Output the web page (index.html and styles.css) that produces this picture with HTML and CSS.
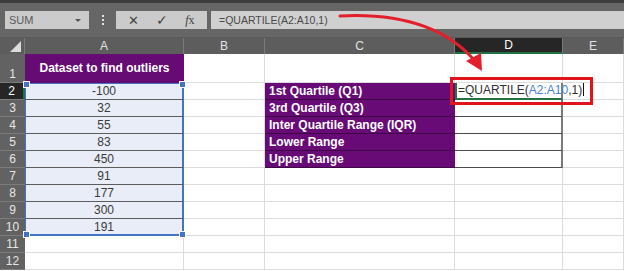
FILE: index.html
```html
<!DOCTYPE html>
<html lang="en">
<head>
<meta charset="UTF-8">
<title>Quartile outliers</title>
<link rel="stylesheet" href="styles.css">
</head>
<body>
<div class="app">
    <div class="topband"></div>
    <div class="toolbar">
        <div class="namebox">SUM<span class="caret"></span></div>
        <div class="grip"><i></i><i></i><i></i></div>
        <div class="fxbtns">
            <span class="btn">&#x2715;</span>
            <span class="btn check">&#x2713;</span>
            <span class="btn fx"><i>f</i>x</span>
        </div>
        <div class="formula">=QUARTILE(A2:A10,1)</div>
    </div>

    <div class="sheet">
        <div class="corner"><span class="tri"></span></div>
        <div class="colhead">A</div>
        <div class="colhead">B</div>
        <div class="colhead">C</div>
        <div class="colhead active">D</div>
        <div class="colhead">E</div>

        <div class="rowhead">1</div>
        <div class="cell title">Dataset to find outliers</div>
        <div class="cell"></div>
        <div class="cell"></div>
        <div class="cell"></div>
        <div class="cell"></div>

        <div class="rowhead active">2</div>
        <div class="cell data first">-100</div>
        <div class="cell"></div>
        <div class="cell label">1st Quartile (Q1)</div>
        <div class="cell out editing">=QUARTILE(<span class="ref">A2:A10</span>,1)<span class="caretbar"></span></div>
        <div class="cell"></div>

        <div class="rowhead">3</div>
        <div class="cell data">32</div>
        <div class="cell"></div>
        <div class="cell label">3rd Quartile (Q3)</div>
        <div class="cell out"></div>
        <div class="cell"></div>

        <div class="rowhead">4</div>
        <div class="cell data">55</div>
        <div class="cell"></div>
        <div class="cell label">Inter Quartile Range (IQR)</div>
        <div class="cell out"></div>
        <div class="cell"></div>

        <div class="rowhead">5</div>
        <div class="cell data">83</div>
        <div class="cell"></div>
        <div class="cell label">Lower Range</div>
        <div class="cell out"></div>
        <div class="cell"></div>

        <div class="rowhead">6</div>
        <div class="cell data">450</div>
        <div class="cell"></div>
        <div class="cell label">Upper Range</div>
        <div class="cell out"></div>
        <div class="cell"></div>

        <div class="rowhead">7</div>
        <div class="cell data">91</div>
        <div class="cell"></div>
        <div class="cell"></div>
        <div class="cell"></div>
        <div class="cell"></div>

        <div class="rowhead">8</div>
        <div class="cell data">177</div>
        <div class="cell"></div>
        <div class="cell"></div>
        <div class="cell"></div>
        <div class="cell"></div>

        <div class="rowhead">9</div>
        <div class="cell data">300</div>
        <div class="cell"></div>
        <div class="cell"></div>
        <div class="cell"></div>
        <div class="cell"></div>

        <div class="rowhead">10</div>
        <div class="cell data last">191</div>
        <div class="cell"></div>
        <div class="cell"></div>
        <div class="cell"></div>
        <div class="cell"></div>

        <div class="rowhead">11</div>
        <div class="cell"></div>
        <div class="cell"></div>
        <div class="cell"></div>
        <div class="cell"></div>
        <div class="cell"></div>

        <div class="rowhead">12</div>
        <div class="cell"></div>
        <div class="cell"></div>
        <div class="cell"></div>
        <div class="cell"></div>
        <div class="cell"></div>
    </div>

    <!-- annotation drawn over the screenshot -->
    <div class="redbox"></div>
    <svg class="arrow" width="624" height="271" viewBox="0 0 624 271">
        <path d="M340 16 C400 13 446 28 474 60" fill="none" stroke="#e3202a" stroke-width="3" stroke-linecap="round"/>
        <polygon points="482,71 466,61 481,53" fill="#e3202a"/>
    </svg>
</div>
</body>
</html>
```

FILE: styles.css
```css
* {
    box-sizing: border-box;
}
body {
    margin: 0;
    background: #fff;
    font-family: "Liberation Sans", Arial, sans-serif;
}
.app {
    position: relative;
    width: 624px;
    height: 271px;
    overflow: hidden;
}
.topband {
    height: 3px;
    background: #3d3d3d;
}

/* formula bar */
.toolbar {
    display: flex;
    align-items: center;
    height: 35px;
    padding: 0 0 0 5px;
    background: #666;
    border-bottom: 1px solid #5a5a5a;
}
.namebox {
    position: relative;
    width: 84px;
    height: 18px;
    background: #cbcbcb;
    color: #5a5a5a;
    font-size: 11px;
    line-height: 18px;
    padding-left: 4px;
}
.caret {
    position: absolute;
    right: 8px;
    top: 8px;
    border-left: 3px solid transparent;
    border-right: 3px solid transparent;
    border-top: 3px solid #555;
}
.grip {
    display: flex;
    flex-direction: column;
    gap: 2px;
    width: 27px;
    align-items: center;
}
.grip i {
    width: 2px;
    height: 2px;
    background: #e0e0e0;
}
.fxbtns {
    display: flex;
    align-items: center;
    justify-content: space-around;
    width: 91px;
    height: 18px;
    background: #cbcbcb;
    color: #444;
    font-size: 13px;
    padding: 0 4px;
}
.btn.check {
    font-size: 14px;
}
.btn.fx {
    font-family: "Liberation Serif", serif;
    font-size: 12px;
}
.formula {
    flex: 1;
    height: 18px;
    margin-left: 4px;
    background: #d0d0d0;
    color: #4a4a4a;
    font-size: 10.5px;
    line-height: 18px;
    padding-left: 8px;
}

/* grid */
.sheet {
    display: grid;
    grid-template-columns: 25px 159px 81px 190px 108px 61px;
    grid-template-rows: 16px 29px repeat(11, 17px);
    font-size: 12px;
}
.corner {
    background: #5d5d5d;
    border-right: 1px solid #7a7a7a;
    position: relative;
}
.tri {
    position: absolute;
    right: 3px;
    bottom: 2px;
    border-left: 11px solid transparent;
    border-bottom: 11px solid #dcdcdc;
}
.colhead {
    background: #5d5d5d;
    color: #e2e2e2;
    border-right: 1px solid #7a7a7a;
    text-align: center;
    line-height: 16px;
}
.colhead.active {
    background: #262626;
    color: #fff;
    border-bottom: 2px solid #217346;
    line-height: 15px;
}
.rowhead {
    background: #626262;
    color: #e6e6e6;
    border-bottom: 1px solid #7c7c7c;
    display: flex;
    align-items: flex-end;
    justify-content: center;
    line-height: 16px;
}
.rowhead.active {
    background: #262626;
    color: #fff;
    border-right: 2px solid #217346;
}
.cell {
    border-right: 1px solid #dcdcdc;
    border-bottom: 1px solid #dcdcdc;
    line-height: 16px;
    white-space: nowrap;
    color: #333;
}
.title {
    background: #660b74;
    color: #fff;
    font-weight: bold;
    text-align: center;
    line-height: 29px;
    border: none;
}
.data {
    position: relative;
    background: #e8edf8;
    text-align: center;
    border-bottom: 1px solid #5c5c5c;
    border-left: 1px solid #4472c4;
    border-right: 2px solid #4472c4;
    color: #3a3a3a;
}
.data.first {
    border-top: 1px solid #4472c4;
    line-height: 15px;
}
.data.last {
    border-bottom: 2px solid #4472c4;
}
.data.first::before,
.data.first::after,
.data.last::before,
.data.last::after {
    content: "";
    position: absolute;
    width: 5px;
    height: 5px;
    background: #4472c4;
    border: 1px solid #fff;
}
.data.first::before { left: -3px; top: -3px; }
.data.first::after { right: -4px; top: -3px; }
.data.last::before { left: -3px; bottom: -4px; }
.data.last::after { right: -4px; bottom: -4px; }

.label {
    background: #680b76;
    color: #fff;
    font-weight: bold;
    padding-left: 4px;
    border-right: none;
    border-bottom: 1px solid #3e0847;
}
.out {
    border-bottom: 1px solid #4a4a4a;
    border-right: 2px solid #7a7a7a;
}
.editing {
    position: relative;
    border-left: 2px solid #217346;
    border-bottom: 2px solid #217346;
    padding-left: 1px;
    color: #2f2f2f;
    overflow: visible;
    z-index: 1;
    line-height: 15px;
}
.ref {
    color: #4a7fd0;
}
.caretbar {
    display: inline-block;
    width: 1px;
    height: 13px;
    margin-left: 1px;
    vertical-align: -2px;
    background: #111;
}

/* annotation */
.redbox {
    position: absolute;
    left: 450px;
    top: 77px;
    width: 143px;
    height: 28px;
    border: 3px solid #e1141e;
    z-index: 2;
}
.arrow {
    position: absolute;
    left: 0;
    top: 0;
    z-index: 3;
}
```
